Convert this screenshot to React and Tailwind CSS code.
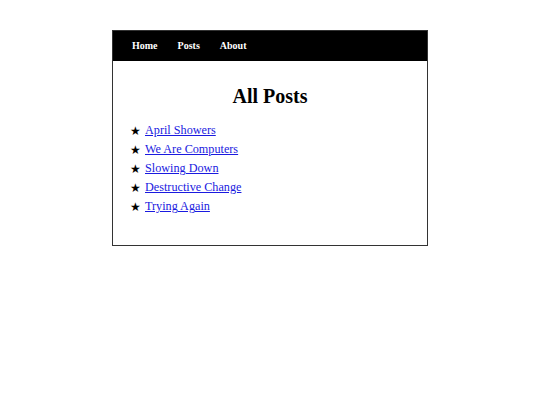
import React from 'react';

const POSTS = ['April Showers', 'We Are Computers', 'Slowing Down', 'Destructive Change', 'Trying Again'];

const NAV = ['Home', 'Posts', 'About'];

const App = () => {
  return (
    <div className="min-h-screen bg-white pt-[30px] font-['Liberation_Serif',serif]">
      <div className="w-[316px] mx-auto border border-[#333] bg-white">
        {/* Top nav bar */}
        <nav className="h-[30px] bg-black flex items-center pl-[9px]">
          {NAV.map((item) => (
            <a key={item} href="#" className="px-[10px] text-[10px] font-bold text-white leading-none">
              {item}
            </a>
          ))}
        </nav>

        <main className="pt-[23px] pb-[29px] px-[17px]">
          <h1 className="text-center text-[20px] leading-[24px] font-bold text-black">All Posts</h1>
          <ul className="mt-[13px]">
            {POSTS.map((post) => (
              <li key={post} className="flex items-center h-[19px] text-[12.2px]">
                <span className="w-[15px] text-[12px] text-black">★</span>
                <a href="#" className="text-[#1a1ae0] underline">{post}</a>
              </li>
            ))}
          </ul>
        </main>
      </div>
    </div>
  );
};

export default App;
